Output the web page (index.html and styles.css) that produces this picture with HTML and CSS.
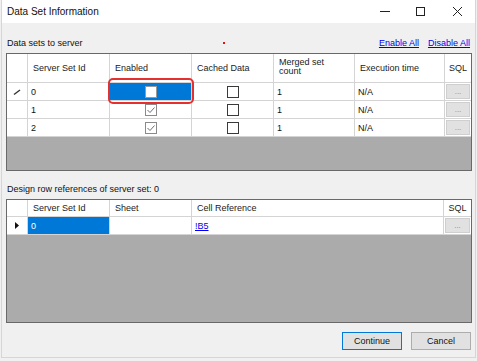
FILE: index.html
```html
<!DOCTYPE html>
<html lang="en">
<head>
  <meta charset="UTF-8" />
  <title>Data Set Information</title>
  <link rel="stylesheet" href="styles.css">
</head>
<body>
  <div class="window">
    <!-- title bar -->
    <div class="titlebar">
      <span class="title">Data Set Information</span>
      <div class="controls">
        <svg class="ctl" width="36" height="23" viewBox="0 0 36 23"><line x1="13" y1="11.5" x2="23" y2="11.5" stroke="#222" stroke-width="1"/></svg>
        <svg class="ctl" width="36" height="23" viewBox="0 0 36 23"><rect x="13.5" y="7.5" width="8" height="8" fill="none" stroke="#222" stroke-width="1"/></svg>
        <svg class="ctl" width="36" height="23" viewBox="0 0 36 23"><path d="M14 7 L23 16 M23 7 L14 16" stroke="#222" stroke-width="1"/></svg>
      </div>
    </div>

    <div class="content">
      <!-- first grid -->
      <div class="label-row">
        <span>Data sets to server</span>
        <span class="red-dot"></span>
        <div class="links">
          <a href="#">Enable All</a>
          <a href="#">Disable All</a>
        </div>
      </div>

      <div class="grid grid-top">
        <div class="row head cols-top">
          <div class="cell rh"></div>
          <div class="cell">Server Set Id</div>
          <div class="cell">Enabled</div>
          <div class="cell">Cached Data</div>
          <div class="cell wrap">Merged set<br>count</div>
          <div class="cell">Execution time</div>
          <div class="cell center">SQL</div>
        </div>
        <div class="row cols-top">
          <div class="cell rh">
            <svg width="12" height="10" viewBox="0 0 12 10"><path d="M3 7.5 L9 3" stroke="#333" stroke-width="1.4"/></svg>
          </div>
          <div class="cell">0</div>
          <div class="cell center selected"><span class="check white"></span></div>
          <div class="cell center"><span class="check"></span></div>
          <div class="cell">1</div>
          <div class="cell">N/A</div>
          <div class="cell btn-cell"><span class="dots">...</span></div>
        </div>
        <div class="row cols-top">
          <div class="cell rh"></div>
          <div class="cell">1</div>
          <div class="cell center"><span class="check on"><svg width="10" height="10" viewBox="0 0 10 10"><path d="M1.5 5 L4 7.5 L8.5 2.5" fill="none" stroke="#6e6e6e" stroke-width="1"/></svg></span></div>
          <div class="cell center"><span class="check"></span></div>
          <div class="cell">1</div>
          <div class="cell">N/A</div>
          <div class="cell btn-cell"><span class="dots">...</span></div>
        </div>
        <div class="row cols-top">
          <div class="cell rh"></div>
          <div class="cell">2</div>
          <div class="cell center"><span class="check on"><svg width="10" height="10" viewBox="0 0 10 10"><path d="M1.5 5 L4 7.5 L8.5 2.5" fill="none" stroke="#6e6e6e" stroke-width="1"/></svg></span></div>
          <div class="cell center"><span class="check"></span></div>
          <div class="cell">1</div>
          <div class="cell">N/A</div>
          <div class="cell btn-cell"><span class="dots">...</span></div>
        </div>
        <!-- red highlight around the selected cell -->
        <div class="highlight"></div>
      </div>

      <!-- second grid -->
      <div class="label-row second">
        <span>Design row references of server set: 0</span>
      </div>

      <div class="grid grid-bottom">
        <div class="row head small cols-bottom">
          <div class="cell rh"></div>
          <div class="cell">Server Set Id</div>
          <div class="cell">Sheet</div>
          <div class="cell">Cell Reference</div>
          <div class="cell center">SQL</div>
        </div>
        <div class="row cols-bottom">
          <div class="cell rh">
            <svg width="8" height="9" viewBox="0 0 8 9"><path d="M2 1 L6 4.5 L2 8 Z" fill="#111"/></svg>
          </div>
          <div class="cell selected">0</div>
          <div class="cell"></div>
          <div class="cell"><a href="#">!B5</a></div>
          <div class="cell btn-cell"><span class="dots">...</span></div>
        </div>
      </div>

      <div class="buttons">
        <button class="primary">Continue</button>
        <button>Cancel</button>
      </div>
    </div>
  </div>
</body>
</html>
```

FILE: styles.css
```css
body {
  margin: 0;
  background-color: #f0f0f0;
  font-family: 'Liberation Sans', Arial, sans-serif;
  font-size: 9px;
  color: #111;
}

.window {
  width: 475px;
  height: 358px;
  margin-left: 1px;
  border: 1px solid #d6d6d6;
  border-top: none;
  box-sizing: border-box;
  background-color: #f0f0f0;
}

/* title bar */
.titlebar {
  height: 23px;
  background-color: #fff;
  display: flex;
  align-items: center;
  justify-content: space-between;
}

.title {
  font-size: 10px;
  padding-left: 5px;
}

.controls {
  display: flex;
}

.ctl {
  display: block;
}

/* content */
.content {
  padding: 13px 4px 0 4px;
}

.label-row {
  height: 14px;
  line-height: 14px;
  display: flex;
  align-items: center;
  padding-left: 1px;
  margin-bottom: 3px;
}

.label-row.second {
  margin-top: 11px;
}

.red-dot {
  width: 2px;
  height: 2px;
  background-color: #e81010;
  margin-left: 140px;
}

.links {
  margin-left: auto;
  display: flex;
  gap: 9px;
  padding-right: 1px;
}

.links a,
.cell a {
  color: #0000ee;
  text-decoration: underline;
}

/* data grid */
.grid {
  position: relative;
  width: 466px;
  border: 1px solid #696969;
  box-sizing: border-box;
  background-color: #ababab;
}

.grid-top {
  height: 118px;
}

.grid-bottom {
  height: 124px;
}

.row {
  display: grid;
  height: 18px;
}

.cols-top {
  grid-template-columns: 21px 82px 82px 82px 81px 90px 26px;
}

.cols-bottom {
  grid-template-columns: 21px 82px 82px 252px 27px;
}

.row.head {
  height: 29px;
}

.row.head.small {
  height: 17px;
}

.cell {
  background-color: #fff;
  border-right: 1px solid #d4d4d4;
  border-bottom: 1px solid #d4d4d4;
  box-sizing: border-box;
  display: flex;
  align-items: center;
  padding-left: 3px;
  white-space: nowrap;
  overflow: hidden;
}

.head .cell {
  padding-left: 5px;
  color: #222;
}

.head .cell.wrap {
  white-space: normal;
  line-height: 9px;
  padding-bottom: 2px;
}

.cell:last-child {
  border-right: none;
}

.cell.rh {
  padding-left: 0;
  justify-content: center;
}

.cell.center {
  justify-content: center;
  padding-left: 0;
}

.head .cell.center {
  padding-left: 0;
}

.cell.selected {
  background-color: #0078d7;
  color: #fff;
}

.check {
  width: 12px;
  height: 12px;
  border: 1px solid #3a3a3a;
  box-sizing: border-box;
  background-color: #fff;
  display: flex;
  align-items: center;
  justify-content: center;
}

.check.on {
  border-color: #8a8a8a;
}

.check.white {
  border-color: #999;
}

.btn-cell {
  padding: 1px;
}

.dots {
  flex: 1;
  height: 100%;
  background-color: #e1e1e1;
  border: 1px solid #cfcfcf;
  box-sizing: border-box;
  color: #888;
  font-size: 8px;
  display: flex;
  align-items: center;
  justify-content: center;
}

.highlight {
  position: absolute;
  left: 101px;
  top: 24px;
  width: 86px;
  height: 26px;
  border: 2px solid #e53030;
  border-radius: 5px;
  box-sizing: border-box;
}

/* bottom buttons */
.buttons {
  display: flex;
  justify-content: flex-end;
  gap: 9px;
  margin-top: 9px;
  padding-right: 0;
}

.buttons button {
  width: 60px;
  height: 18px;
  font-family: 'Liberation Sans', Arial, sans-serif;
  font-size: 9px;
  color: #111;
  background-color: #e1e1e1;
  border: 1px solid #adadad;
  padding: 0;
}

.buttons button.primary {
  border: 1px solid #0078d7;
}
```
